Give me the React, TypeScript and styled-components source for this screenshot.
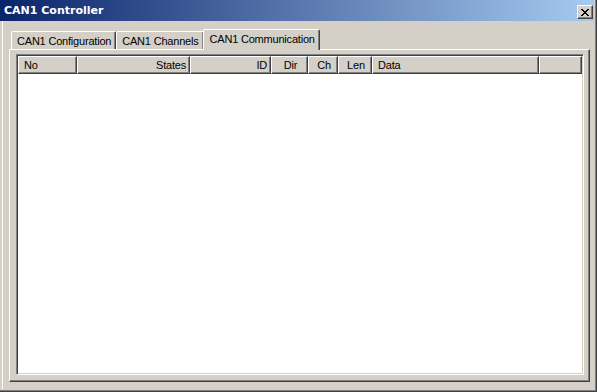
import React from "react";
import styled, { createGlobalStyle } from "styled-components";

const GlobalStyle = createGlobalStyle`
  html, body {
    margin: 0;
    padding: 0;
    background: #d4d0c8;
  }
  * {
    box-sizing: border-box;
  }
`;

const Window = styled.div`
  width: 597px;
  height: 392px;
  display: flex;
  flex-direction: column;
  background: #d4d0c8;
  border-right: 1px solid #404040;
  border-bottom: 1px solid #404040;
  font-family: "Liberation Sans", Arial, sans-serif;
  font-size: 11px;
  letter-spacing: -0.2px;
  color: #000;
`;

const Frame = styled.div`
  flex: 1;
  display: flex;
  flex-direction: column;
  border-right: 1px solid #808080;
  border-bottom: 1px solid #808080;
  padding: 0 1px 1px 0;
`;

const TitleBar = styled.div`
  height: 21px;
  display: flex;
  align-items: center;
  justify-content: space-between;
  padding: 0 1px 0 4px;
  background: linear-gradient(to right, #0a246a, #a6caf0);
`;

const Title = styled.span`
  color: #fff;
  font-family: "DejaVu Sans", "Liberation Sans", sans-serif;
  font-weight: bold;
  font-size: 11px;
  letter-spacing: 0;
`;

const CloseButton = styled.button`
  width: 16px;
  height: 14px;
  padding: 0;
  margin: 3px 0 0 0;
  display: flex;
  align-items: center;
  justify-content: center;
  background: #d4d0c8;
  border: 1px solid;
  border-color: #fff #404040 #404040 #fff;
  box-shadow: inset -1px -1px 0 #808080;
`;

const Body = styled.div`
  flex: 1;
  display: flex;
  flex-direction: column;
  margin-left: 2px;
  border-left: 1px solid #fff;
  padding: 8px 4px 7px 6px;
`;

const TabStrip = styled.div`
  display: flex;
  align-items: flex-end;
  height: 21px;
  padding-left: 2px;
  position: relative;
  z-index: 1;
  margin-bottom: -1px;
`;

const Tab = styled.div<{ $active?: boolean }>`
  height: ${(p) => (p.$active ? 21 : 18)}px;
  padding: ${(p) => (p.$active ? "2px 4px 0 6px" : "2px 4px 0 5px")};
  margin: ${(p) => (p.$active ? "0 -2px 0 -1px" : "0 0 1px 0")};
  background: #d4d0c8;
  border-top: 1px solid #fff;
  border-left: 1px solid #fff;
  border-right: 1px solid #404040;
  box-shadow: inset -1px 0 0 #808080;
  border-radius: 2px 2px 0 0;
  white-space: nowrap;
  line-height: 14px;
  position: relative;
  z-index: ${(p) => (p.$active ? 2 : 1)};
`;

const Panel = styled.div`
  flex: 1;
  display: flex;
  flex-direction: column;
  padding: 4px 5px 6px 6px;
  border-top: 1px solid #fff;
  border-left: 1px solid #fff;
  border-right: 1px solid #404040;
  border-bottom: 1px solid #404040;
  box-shadow: inset -1px -1px 0 #808080;
`;

const ListView = styled.div`
  flex: 1;
  display: flex;
  flex-direction: column;
  background: #fff;
  border: 1px solid;
  border-color: #808080 #fff #fff #808080;
  box-shadow: inset 1px 1px 0 #404040, inset -1px -1px 0 #d4d0c8;
  padding: 1px 1px 2px 1px;
`;

const HeaderRow = styled.div`
  display: flex;
  height: 18px;
`;

const HeaderCell = styled.div<{ $w?: number; $align?: string }>`
  ${(p) => (p.$w ? `width: ${p.$w}px;` : "flex: 1;")}
  flex-shrink: 0;
  height: 18px;
  background: #d4d0c8;
  border-top: 1px solid #fff;
  border-left: 1px solid #fff;
  border-right: 1px solid #404040;
  border-bottom: 1px solid #404040;
  box-shadow: inset -1px -1px 0 #808080;
  display: flex;
  align-items: center;
  justify-content: ${(p) => p.$align || "flex-start"};
  padding: 0 3px 1px 5px;
  white-space: nowrap;
`;

const Rows = styled.div`
  flex: 1;
  background: #fff;
`;

const columns: { label: string; w?: number; align?: string }[] = [
  { label: "No", w: 59 },
  { label: "States", w: 113, align: "flex-end" },
  { label: "ID", w: 81, align: "flex-end" },
  { label: "Dir", w: 37, align: "center" },
  { label: "Ch", w: 30, align: "center" },
  { label: "Len", w: 34, align: "center" },
  { label: "Data", w: 167 },
  { label: "" },
];

const CloseIcon = () => (
  <svg width="8" height="7" viewBox="0 0 8 7" shapeRendering="crispEdges">
    <path d="M0 0h2v1H0zM6 0h2v1H6zM1 1h2v1H1zM5 1h2v1H5zM2 2h4v1H2zM3 3h2v1H3zM2 4h4v1H2zM1 5h2v1H1zM5 5h2v1H5zM0 6h2v1H0zM6 6h2v1H6z" fill="#000" />
  </svg>
);

const App = () => {
  return (
    <>
      <GlobalStyle />
      <Window>
        <Frame>
          <TitleBar>
            <Title>CAN1 Controller</Title>
            <CloseButton aria-label="Close">
              <CloseIcon />
            </CloseButton>
          </TitleBar>
          <Body>
            <TabStrip>
              <Tab>CAN1 Configuration</Tab>
              <Tab>CAN1 Channels</Tab>
              <Tab $active>CAN1 Communication</Tab>
            </TabStrip>
            <Panel>
              <ListView>
                <HeaderRow>
                  {columns.map((c, i) => (
                    <HeaderCell key={i} $w={c.w} $align={c.align}>
                      {c.label}
                    </HeaderCell>
                  ))}
                </HeaderRow>
                <Rows />
              </ListView>
            </Panel>
          </Body>
        </Frame>
      </Window>
    </>
  );
};

export default App;
